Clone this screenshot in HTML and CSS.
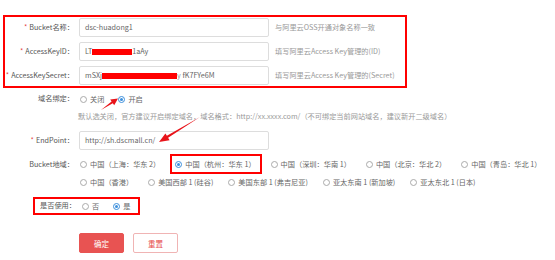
FILE: index.html
```html
<!DOCTYPE html>
<html lang="zh-CN">
<head>
<meta charset="utf-8">
<title>OSS</title>
<link rel="stylesheet" href="styles.css">
</head>
<body>
<div class="page">
  <div class="box1">
    <div class="row">
      <label class="lbl"><span class="req">*</span>Bucket名称：</label>
      <div class="field">dsc-huadong1</div>
      <span class="hint">与阿里云OSS开通对象名称一致</span>
    </div>
    <div class="row">
      <label class="lbl"><span class="req">*</span>AccessKeyID：</label>
      <div class="field">LT<span class="redact r1"></span>1aAy</div>
      <span class="hint">填写阿里云Access Key管理的(ID)</span>
    </div>
    <div class="row">
      <label class="lbl"><span class="req">*</span>AccessKeySecret：</label>
      <div class="field">mSXj<span class="redact r2"></span><span class="faint">y</span>&nbsp;fK7FYe6M</div>
      <span class="hint">填写阿里云Access Key管理的(Secret)</span>
    </div>
  </div>

  <div class="row r-bind">
    <label class="lbl">域名绑定：</label>
    <div class="radios">
      <span class="opt"><i class="radio"></i>关闭</span>
      <span class="opt"><i class="radio on"></i>开启</span>
    </div>
  </div>

  <div class="row r-hint">
    <span class="note">默认选关闭，官方建议开启绑定域名，域名格式：http://xx.xxxx.com/（不可绑定当前网站域名，建议新开二级域名）</span>
  </div>

  <div class="row r-end">
    <label class="lbl"><span class="req">*</span>EndPoint：</label>
    <div class="field">http://sh.dscmall.cn/</div>
  </div>

  <div class="r-region">
    <label class="lbl">Bucket地域：</label>
    <div class="regions">
      <div class="rrow first">
        <span class="opt"><i class="radio"></i>中国（上海：华东 2）</span>
        <span class="opt sel"><i class="radio on"></i>中国（杭州：华东 1）</span>
        <span class="opt"><i class="radio"></i>中国（深圳：华南 1）</span>
        <span class="opt"><i class="radio"></i>中国（北京：华北 2）</span>
        <span class="opt"><i class="radio"></i>中国（青岛：华北 1）</span>
      </div>
      <div class="rrow">
        <span class="opt"><i class="radio"></i>中国（香港）</span>
        <span class="opt"><i class="radio"></i>美国西部 1 (硅谷)</span>
        <span class="opt"><i class="radio"></i>美国东部 1 (弗吉尼亚)</span>
        <span class="opt"><i class="radio"></i>亚太东南 1 (新加坡)</span>
        <span class="opt"><i class="radio"></i>亚太东北 1 (日本)</span>
      </div>
    </div>
  </div>

  <div class="row r-use">
    <div class="box2">
      <label class="lbl">是否使用：</label>
      <div class="radios">
        <span class="opt"><i class="radio"></i>否</span>
        <span class="opt"><i class="radio on"></i>是</span>
      </div>
    </div>
  </div>

  <div class="row r-btns">
    <button class="btn primary" type="button">确定</button>
    <button class="btn ghost" type="button">重置</button>
  </div>
</div>

<svg class="arrows" width="555" height="260" viewBox="0 0 555 260" aria-hidden="true">
  <polygon points="101,110 112.8,103.2 114.2,105.3 118,98.5 110.2,99.5 111.6,101.6" fill="#e8141a"/>
  <polygon points="200,117 168.1,137.8 169.6,140.2 159,142 165.4,133.4 166.9,135.8" fill="#e8141a"/>
</svg>
</body>
</html>
```

FILE: styles.css
```css
* { box-sizing: border-box; margin: 0; padding: 0; }
html, body { background: #fff; }
body {
  width: 555px;
  height: 260px;
  position: relative;
  overflow: hidden;
  font-family: "Noto Sans CJK SC", "Noto Sans", sans-serif;
  font-size: 7.2px;
  line-height: 1;
  color: #555;
}

.row { display: flex; align-items: center; }

.lbl {
  flex: none;
  width: 74px;
  text-align: right;
  color: #555;
  white-space: nowrap;
}
.req { color: #e4393c; margin-right: 2px; }

.box1 {
  margin: 15px 0 0 3px;
  width: 404px;
  border: 2px solid #f00;
  padding: 1px 0;
  display: flex;
  flex-direction: column;
  gap: 5px;
}
.box1 .lbl { width: 69px; }

.field {
  flex: none;
  width: 190px;
  height: 19px;
  margin-left: 5px;
  border: 1px solid #ddd;
  border-radius: 2px;
  padding-left: 5px;
  display: flex;
  align-items: center;
  color: #666;
  white-space: nowrap;
}
.hint { margin-left: 6px; color: #999; white-space: nowrap; }

.redact { display: inline-block; height: 6.5px; background: #f00; margin-top: 1px; }
.r1 { width: 40px; }
.r2 { width: 75px; }
.faint { color: #999; }

.radios { display: flex; align-items: center; margin-left: 6px; gap: 14px; }
.opt {
  display: inline-flex;
  align-items: center;
  line-height: 10px;
  height: 10px;
  color: #666;
  white-space: nowrap;
}
.radio {
  flex: none;
  width: 7px;
  height: 7px;
  border: 1px solid #aaa;
  border-radius: 50%;
  margin-right: 3px;
  display: flex;
  align-items: center;
  justify-content: center;
}
.radio.on { border-color: #3c8fdc; }
.radio.on::after {
  content: "";
  width: 3px;
  height: 3px;
  border-radius: 50%;
  background: #3c8fdc;
}

.r-bind { margin-top: 2px; height: 18px; }
.r-hint { margin-top: 2px; height: 14px; padding-left: 78px; }
.note { color: #999; white-space: nowrap; }
.r-end { margin-top: 7px; height: 19px; }

.r-region { margin-top: 4px; display: flex; align-items: flex-start; }
.r-region .lbl { height: 20px; line-height: 20px; }
.regions { margin-left: 6px; display: flex; flex-direction: column; }
.rrow { display: flex; align-items: center; gap: 15px; height: 16px; }
.rrow.first { height: 20px; }
.opt.sel { position: relative; }
.opt.sel::after {
  content: "";
  position: absolute;
  left: -5px;
  right: -6px;
  top: -5px;
  bottom: -5px;
  border: 2px solid #f00;
}

.r-use { margin-top: 7px; padding-left: 33px; }
.box2 {
  display: flex;
  align-items: center;
  height: 18px;
  border: 2px solid #f00;
  padding: 0 8px 0 2px;
}
.box2 .lbl { width: 39px; }

.r-btns { margin-top: 18px; padding-left: 79px; gap: 9px; }
.btn {
  width: 45px;
  height: 20px;
  border-radius: 2px;
  font-family: "Noto Sans CJK SC", sans-serif;
  font-size: 7.5px;
  cursor: pointer;
}
.btn.primary { background: #e85352; border: 1px solid #e85352; color: #fff; }
.btn.ghost { background: #fff; border: 1px solid #f0b4b4; color: #e64b4b; }

.arrows { position: absolute; left: 0; top: 0; pointer-events: none; }
```
